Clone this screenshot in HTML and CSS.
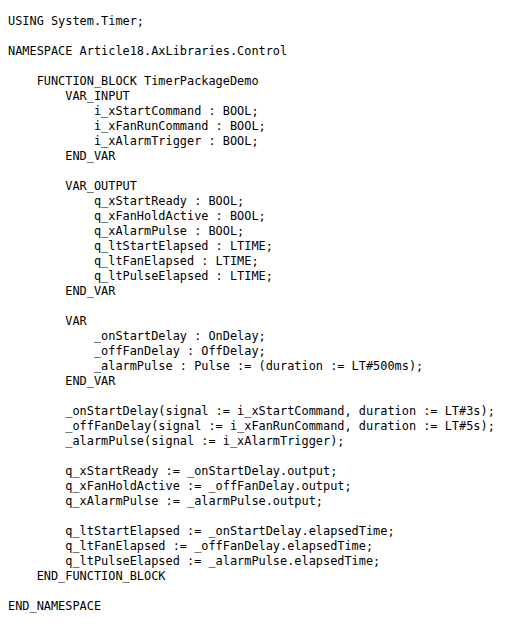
FILE: index.html
```html
<!DOCTYPE html>
<html>
<head>
<meta charset="utf-8">
<link rel="stylesheet" href="styles.css">
</head>
<body>
<pre class="code">USING System.Timer;

NAMESPACE Article18.AxLibraries.Control

    FUNCTION_BLOCK TimerPackageDemo
        VAR_INPUT
            i_xStartCommand : BOOL;
            i_xFanRunCommand : BOOL;
            i_xAlarmTrigger : BOOL;
        END_VAR

        VAR_OUTPUT
            q_xStartReady : BOOL;
            q_xFanHoldActive : BOOL;
            q_xAlarmPulse : BOOL;
            q_ltStartElapsed : LTIME;
            q_ltFanElapsed : LTIME;
            q_ltPulseElapsed : LTIME;
        END_VAR

        VAR
            _onStartDelay : OnDelay;
            _offFanDelay : OffDelay;
            _alarmPulse : Pulse := (duration := LT#500ms);
        END_VAR

        _onStartDelay(signal := i_xStartCommand, duration := LT#3s);
        _offFanDelay(signal := i_xFanRunCommand, duration := LT#5s);
        _alarmPulse(signal := i_xAlarmTrigger);

        q_xStartReady := _onStartDelay.output;
        q_xFanHoldActive := _offFanDelay.output;
        q_xAlarmPulse := _alarmPulse.output;

        q_ltStartElapsed := _onStartDelay.elapsedTime;
        q_ltFanElapsed := _offFanDelay.elapsedTime;
        q_ltPulseElapsed := _alarmPulse.elapsedTime;
    END_FUNCTION_BLOCK

END_NAMESPACE</pre>
</body>
</html>
```

FILE: styles.css
```css
html, body {
  background: #ffffff;
}
body {
  margin: 8px;
}
.code {
  margin: 0;
  padding: 6px 0 0 0;
  font-family: "DejaVu Sans Mono", "Liberation Mono", monospace;
  font-size: 11.9px;
  line-height: 15px;
  color: #000000;
  white-space: pre;
}
```
